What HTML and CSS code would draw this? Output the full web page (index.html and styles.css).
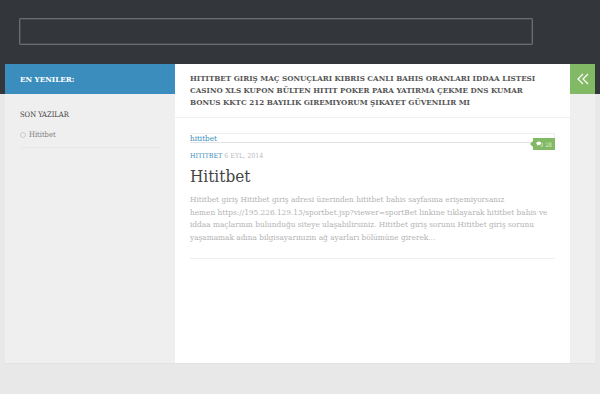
FILE: index.html
```html
<!DOCTYPE html>
<html lang="tr">
<head>
<meta charset="utf-8">
<title>Hititbet</title>
<link rel="stylesheet" href="styles.css">
</head>
<body>
<header class="site-header">
  <div class="search-box"></div>
</header>
<div class="main">
  <aside class="sidebar-left">
    <div class="latest-head">EN YENILER:</div>
    <div class="widget">
      <h3 class="widget-title">SON YAZILAR</h3>
      <ul class="widget-list">
        <li class="widget-item"><span class="bullet"></span><span>Hititbet</span></li>
      </ul>
    </div>
  </aside>
  <main class="content">
    <div class="page-title">HITITBET GIRIŞ MAÇ SONUÇLARI KIBRIS CANLI BAHIS ORANLARI IDDAA LISTESI CASINO XLS KUPON BÜLTEN HITIT POKER PARA YATIRMA ÇEKME DNS KUMAR BONUS KKTC 212 BAYILIK GIREMIYORUM ŞIKAYET GÜVENILIR MI</div>
    <article class="post">
      <div class="thumb">
        <a class="thumb-link">hititbet</a>
        <span class="comments">
          <svg class="comment-icon" viewBox="0 0 10 8" width="7" height="6"><path d="M4 .5C2 .5.5 1.500 .5 3c0 .9.5 1.600 1.300 2.100L1.500 6.500 3.200 5.500H4C6 5.500 7.500 4.500 7.500 3S6 .5 4 .5Z" fill="#fff"/><path d="M8.300 2.500C9.200 3 9.700 3.800 9.700 4.600c0 .8-.4 1.400-1.100 1.800l.3 1.200-1.500-.9H6.200" fill="none" stroke="#fff" stroke-width=".8"/></svg>28
        </span>
      </div>
      <div class="post-meta"><a class="cat">HITITBET</a> <span class="date">6 EYL, 2014</span></div>
      <h2 class="post-title">Hititbet</h2>
      <p class="excerpt">Hititbet giriş Hititbet giriş adresi üzerinden hititbet bahis sayfasına erişemiyorsanız hemen&nbsp;https://195.226.129.13/sportbet.jsp?viewer=sportBet linkine tıklayarak hititbet bahis ve iddaa maçlarının bulunduğu siteye ulaşabilirsiniz. Hititbet giriş sorunu Hititbet giriş sorunu yaşamamak adına bilgisayarınızın ağ ayarları bölümüne girerek...</p>
    </article>
  </main>
  <aside class="sidebar-right">
    <div class="toggle">
      <svg viewBox="0 0 12 12" width="12" height="12"><path d="M6 1 1 6l5 5M11 1 6 6l5 5" fill="none" stroke="#fff" stroke-width="1.200"/></svg>
    </div>
  </aside>
</div>
<footer class="site-footer"></footer>
</body>
</html>
```
FILE: styles.css
```css
* { box-sizing: border-box; }
html, body { margin: 0; padding: 0; }
body {
  width: 600px;
  height: 400px;
  overflow: hidden;
  background: #e8e8e8;
  font-family: "DejaVu Serif Condensed", "DejaVu Serif", serif;
  font-stretch: condensed;
}
.site-header {
  height: 94px;
  background: #33363b;
  padding: 18px 0 0 19px;
}
.search-box {
  width: 514px;
  height: 27px;
  border: 1px solid #6a6c70;
  border-radius: 1px;
  box-shadow: inset 0 0 0 1px #45484c;
}
.main {
  display: flex;
  width: 590px;
  height: 300px;
  margin: -30px 0 0 5px;
  border-bottom: 1px solid #e2e2e2;
}
.sidebar-left {
  width: 170px;
  background: #efefef;
}
.latest-head {
  height: 30px;
  background: #3b8dbd;
  color: #fff;
  font-size: 8px;
  font-weight: bold;
  line-height: 30px;
  padding-left: 15px;
}
.widget { padding: 15px 15px 0; }
.widget-title {
  margin: 0;
  font-size: 7.500px;
  font-weight: normal;
  line-height: 11px;
  color: #444;
}
.widget-list { list-style: none; margin: 0; padding: 0; }
.widget-item {
  display: flex;
  align-items: center;
  gap: 3px;
  margin-top: 9px;
  padding-bottom: 7px;
  border-bottom: 1px solid #e8e8e8;
  font-size: 7.500px;
  line-height: 11px;
  color: #808080;
}
.bullet {
  width: 6px;
  height: 6px;
  border: 1px solid #ccc;
  border-radius: 50%;
}
.content {
  width: 395px;
  background: #fff;
}
.page-title {
  height: 54px;
  padding: 8px 15px 0;
  border-bottom: 1px solid #f0f0f0;
  font-size: 8px;
  font-weight: bold;
  line-height: 12px;
  color: #555;
}
.post { margin: 15px 15px 0; border-bottom: 1px solid #eee; height: 126px; }
.thumb {
  position: relative;
  height: 10px;
  border: 1px solid #eee;
  border-width: 1px 1px 0 0;
  border-bottom: 1px solid #e3e3e3;
  font-size: 8px;
  line-height: 9px;
}
.thumb-link { color: #3b8dbd; }
.comments {
  position: absolute;
  right: -1px;
  top: 4px;
  display: flex;
  align-items: center;
  gap: 2px;
  height: 12px;
  padding: 0 3px;
  background: #82b965;
  color: #e4f0dd;
  font-size: 6px;
}
.comments::before {
  content: "";
  position: absolute;
  left: -3px;
  top: 3px;
  border-style: solid;
  border-width: 3px 3px 3px 0;
  border-color: transparent #82b965 transparent transparent;
}
.post-meta {
  margin-top: 8px;
  font-size: 7px;
  line-height: 10px;
  color: #bbb;
}
.cat { color: #3b8dbd; }
.post-title {
  margin: 4px 0 0;
  font-size: 17px;
  font-weight: normal;
  line-height: 22px;
  color: #444;
}
.excerpt {
  margin: 6px 0 0;
  font-size: 8.200px;
  line-height: 12.500px;
  color: #b3b3b3;
}
.sidebar-right {
  width: 25px;
  background: #efefef;
}
.toggle {
  height: 30px;
  background: #82b965;
  display: flex;
  align-items: center;
  justify-content: center;
}
.site-footer {
  height: 6px;
  margin-top: 30px;
  background: #fff;
}
```
